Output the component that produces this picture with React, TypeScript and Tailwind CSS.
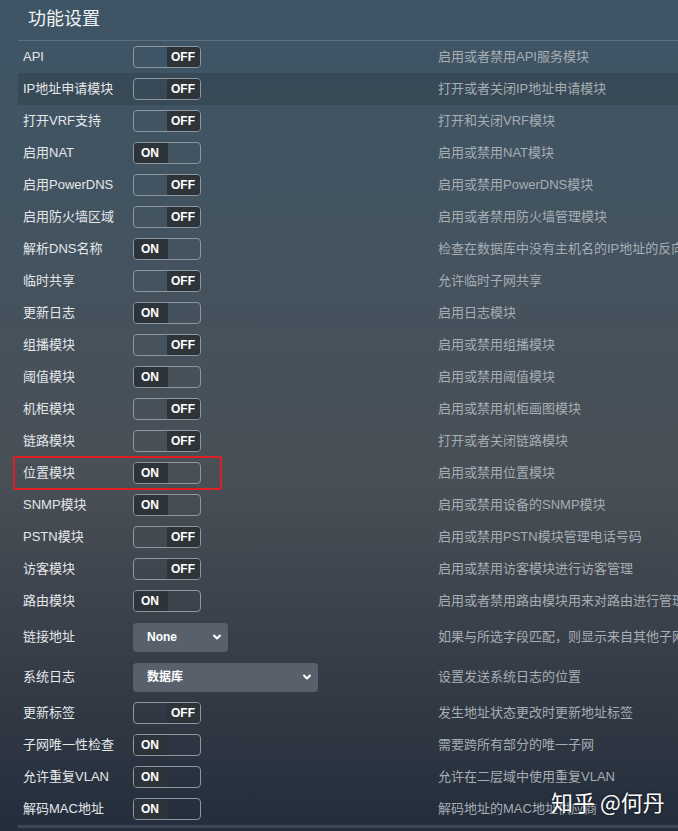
import React from 'react';

type Row =
  | { kind: 'toggle'; label: string; on: boolean; desc: string; hl?: boolean; mark?: boolean }
  | { kind: 'select'; label: string; value: string; wide?: boolean; desc: string };

const ROWS: Row[] = [
  { kind: 'toggle', label: 'API', on: false, desc: '启用或者禁用API服务模块' },
  { kind: 'toggle', label: 'IP地址申请模块', on: false, desc: '打开或者关闭IP地址申请模块', hl: true },
  { kind: 'toggle', label: '打开VRF支持', on: false, desc: '打开和关闭VRF模块' },
  { kind: 'toggle', label: '启用NAT', on: true, desc: '启用或禁用NAT模块' },
  { kind: 'toggle', label: '启用PowerDNS', on: false, desc: '启用或禁用PowerDNS模块' },
  { kind: 'toggle', label: '启用防火墙区域', on: false, desc: '启用或者禁用防火墙管理模块' },
  { kind: 'toggle', label: '解析DNS名称', on: true, desc: '检查在数据库中没有主机名的IP地址的反向DNS' },
  { kind: 'toggle', label: '临时共享', on: false, desc: '允许临时子网共享' },
  { kind: 'toggle', label: '更新日志', on: true, desc: '启用日志模块' },
  { kind: 'toggle', label: '组播模块', on: false, desc: '启用或禁用组播模块' },
  { kind: 'toggle', label: '阈值模块', on: true, desc: '启用或禁用阈值模块' },
  { kind: 'toggle', label: '机柜模块', on: false, desc: '启用或禁用机柜画图模块' },
  { kind: 'toggle', label: '链路模块', on: false, desc: '打开或者关闭链路模块' },
  { kind: 'toggle', label: '位置模块', on: true, desc: '启用或禁用位置模块', mark: true },
  { kind: 'toggle', label: 'SNMP模块', on: true, desc: '启用或禁用设备的SNMP模块' },
  { kind: 'toggle', label: 'PSTN模块', on: false, desc: '启用或禁用PSTN模块管理电话号码' },
  { kind: 'toggle', label: '访客模块', on: false, desc: '启用或禁用访客模块进行访客管理' },
  { kind: 'toggle', label: '路由模块', on: true, desc: '启用或者禁用路由模块用来对路由进行管理' },
  { kind: 'select', label: '链接地址', value: 'None', desc: '如果与所选字段匹配，则显示来自其他子网的地址' },
  { kind: 'select', label: '系统日志', value: '数据库', wide: true, desc: '设置发送系统日志的位置' },
  { kind: 'toggle', label: '更新标签', on: false, desc: '发生地址状态更改时更新地址标签' },
  { kind: 'toggle', label: '子网唯一性检查', on: true, desc: '需要跨所有部分的唯一子网' },
  { kind: 'toggle', label: '允许重复VLAN', on: true, desc: '允许在二层域中使用重复VLAN' },
  { kind: 'toggle', label: '解码MAC地址', on: true, desc: '解码地址的MAC地址供应商' },
];

const FONT = "font-['Liberation_Sans','Noto_Sans_CJK_SC',sans-serif]";

function Toggle({ on }: { on: boolean }) {
  return (
    <div className="flex h-[22px] w-[68px] overflow-hidden rounded-[4px] border border-[#8d979f] text-[12px] font-bold text-white">
      {on ? (
        <>
          <div className="flex w-[34px] items-center pl-[7px] bg-[#2c3439]">ON</div>
          <div className="flex-1" />
        </>
      ) : (
        <>
          <div className="flex-1" />
          <div className="flex w-[33px] items-center pl-[4px] bg-[#2c3439]">OFF</div>
        </>
      )}
    </div>
  );
}

function Select({ value, wide }: { value: string; wide?: boolean }) {
  return (
    <div
      className={`flex h-[29px] items-center justify-between rounded-[4px] bg-[#58616b] pl-[14px] pr-[6px] text-[12px] font-bold text-white ${
        wide ? 'w-[185px]' : 'w-[95px]'
      }`}
    >
      <span>{value}</span>
      <svg width="10" height="10" viewBox="0 0 10 10" fill="none">
        <path d="M2 3.5 L5 6.5 L8 3.5" stroke="#ffffff" strokeWidth="2" strokeLinecap="round" strokeLinejoin="round" />
      </svg>
    </div>
  );
}

export default function App() {
  return (
    <div
      className={`relative h-[831px] w-full overflow-hidden bg-[linear-gradient(180deg,#3e5566_0%,#43535f_30%,#494f56_58%,#3a404a_76%,#232d3b_100%)] ${FONT}`}
    >
      <div className="ml-[18px] flex h-[41px] items-center border-b border-[#5c6f7c] pl-[10px] pb-[2px] text-[18px] text-[#f0f3f5]">
        功能设置
      </div>

      <div className="ml-[18px] border-b-[3px] border-[#3b4657]">
        {ROWS.map((r) => {
          const tall = r.kind === 'select';
          return (
            <div
              key={r.label}
              className={`relative flex items-center ${tall ? 'h-[40px]' : 'h-[32px]'} ${
                r.kind === 'toggle' && r.hl ? 'bg-[#00000020]' : ''
              }`}
            >
              <div className="w-[115px] shrink-0 pl-[5px] text-[13px] text-[#e4e7ea] whitespace-nowrap">{r.label}</div>
              <div className="w-[305px] shrink-0">
                {r.kind === 'toggle' ? <Toggle on={r.on} /> : <Select value={r.value} wide={r.wide} />}
              </div>
              <div className="min-w-0 flex-1 overflow-hidden whitespace-nowrap text-[13px] text-[#a6adb3]">{r.desc}</div>
              {r.kind === 'toggle' && r.mark && (
                <div className="absolute left-[-5px] top-[-1px] h-[34px] w-[209px] rounded-[2px] border-2 border-[#dc2025]" />
              )}
            </div>
          );
        })}
      </div>

      <div className="absolute left-[551px] top-[787px] text-[22px] leading-[28px] text-white [text-shadow:0_0_3px_rgba(0,0,0,0.6)] font-['Noto_Sans_CJK_SC',sans-serif]">
        知乎 @何丹
      </div>
    </div>
  );
}
